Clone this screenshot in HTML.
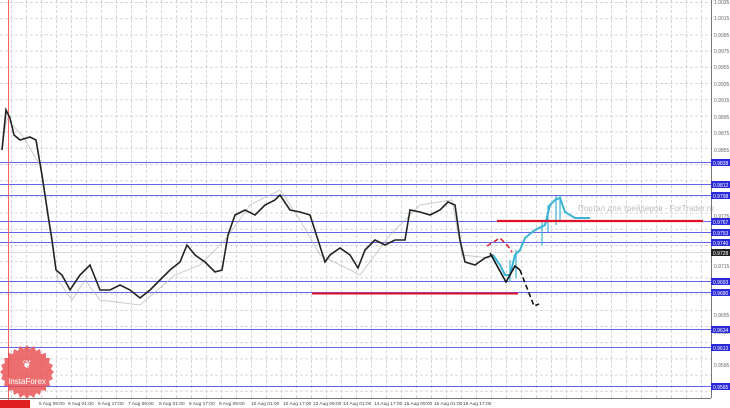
<!DOCTYPE html><html><head><meta charset="utf-8"><style>
html,body{margin:0;padding:0;background:#fff;width:730px;height:408px;overflow:hidden;font-family:"Liberation Sans",sans-serif}
</style></head><body>
<svg width="730" height="408" xmlns="http://www.w3.org/2000/svg" font-family="Liberation Sans, DejaVu Sans, sans-serif">
<defs>
<pattern id="gh" width="730" height="16.2" patternUnits="userSpaceOnUse" y="2"><line x1="0" y1="0.5" x2="711" y2="0.5" stroke="#d6d6d6" stroke-dasharray="3,2"/></pattern>
<pattern id="gv" width="15" height="408" patternUnits="userSpaceOnUse" x="11"><line x1="0.5" y1="0" x2="0.5" y2="408" stroke="#d6d6d6" stroke-dasharray="3,2"/></pattern>
</defs>
<rect width="730" height="408" fill="#fff"/>
<rect x="0" y="0" width="711" height="398" fill="url(#gh)"/>
<rect x="0" y="0" width="711" height="398" fill="url(#gv)"/>
<g stroke="#6464e6" stroke-width="1">
<line x1="0" y1="162.5" x2="711" y2="162.5"/><line x1="0" y1="184.5" x2="711" y2="184.5"/><line x1="0" y1="195.5" x2="711" y2="195.5"/><line x1="0" y1="221.5" x2="711" y2="221.5"/><line x1="0" y1="232.5" x2="711" y2="232.5"/><line x1="0" y1="242.5" x2="711" y2="242.5"/><line x1="0" y1="281.5" x2="711" y2="281.5"/><line x1="0" y1="292.5" x2="711" y2="292.5"/><line x1="0" y1="329.5" x2="711" y2="329.5"/><line x1="0" y1="347.5" x2="711" y2="347.5"/><line x1="0" y1="386.5" x2="711" y2="386.5"/>
</g>
<line x1="0" y1="252.5" x2="711" y2="252.5" stroke="#dcdcdc"/>
<line x1="8.5" y1="0" x2="8.5" y2="408" stroke="#ff6060"/>
<polyline fill="none" stroke="#aaa" stroke-width="1" opacity=".6" points="3,140 7,118 12,125 22,135 40,165 50,230 58,280 72,300 85,280 100,300 140,305 175,275 200,265 225,240 250,205 280,190 300,220 320,255 360,275 390,235 420,205 452,200 462,255 490,258"/>
<polyline fill="none" stroke="#222" stroke-width="1.6" points="2,150 6,110 10,118 14,135 20,140 30,137 36,140 42,175 48,215 52,240 56,270 62,275 70,290 80,275 90,265 100,290 110,290 120,285 130,290 140,298 150,290 160,280 170,270 180,262 187,245 195,255 205,262 215,272 222,270 228,235 235,215 245,210 255,215 265,205 275,200 280,195 290,210 300,212 310,215 318,240 325,262 330,255 340,248 350,255 358,268 365,250 375,240 385,245 395,240 405,240 410,210 420,212 430,215 440,210 448,202 455,205 460,240 465,262 475,265 485,258 493,255"/>
<polyline fill="none" stroke="#3ab4d4" stroke-width="2" points="493,255 500,265 505,275 510,275 515,255 520,250 525,238 535,230 545,225 550,205 555,200 560,198 565,212 575,218 590,218"/>
<g stroke="#3ab4d4" stroke-width="1.2"><line x1="510" y1="260" x2="510" y2="282"/><line x1="516" y1="250" x2="516" y2="278"/><line x1="542" y1="222" x2="542" y2="245"/><line x1="548" y1="205" x2="548" y2="232"/><line x1="556" y1="196" x2="556" y2="225"/><line x1="560" y1="195" x2="560" y2="222"/></g>
<line x1="497" y1="221" x2="703" y2="221" stroke="#e0102a" stroke-width="2.2"/>
<line x1="312" y1="293.5" x2="518" y2="293.5" stroke="#e0102a" stroke-width="2"/>
<polyline fill="none" stroke="#111" stroke-width="1.6" points="490,253 506,282 515,266 520,270"/>
<polyline fill="none" stroke="#111" stroke-width="1.6" stroke-dasharray="5,3" points="520,270 534,306 539,304"/>
<polyline fill="none" stroke="#e02030" stroke-width="1.6" stroke-dasharray="5,3" points="487,246 500,238 508,246 512,252"/>
<text x="578" y="211" font-size="8" fill="#bbb">Портал для трейдеров - ForTrader.ru</text>
<line x1="711.5" y1="0" x2="711.5" y2="398" stroke="#777"/>
<line x1="0" y1="398.5" x2="711" y2="398.5" stroke="#777"/>
<g font-size="5" fill="#666">
<text x="714" y="4">1.0035</text><text x="714" y="20">1.0015</text><text x="714" y="37">0.9995</text><text x="714" y="53">0.9975</text><text x="714" y="69">0.9955</text><text x="714" y="86">0.9935</text><text x="714" y="102">0.9915</text><text x="714" y="119">0.9895</text><text x="714" y="135">0.9875</text><text x="714" y="152">0.9855</text><text x="714" y="218">0.9775</text><text x="714" y="268">0.9715</text><text x="714" y="317">0.9655</text><text x="714" y="334">0.9635</text><text x="714" y="367">0.9595</text>
</g>
<g fill="#2a2ad8"><rect x="711" y="159" width="19" height="7"/><rect x="711" y="181" width="19" height="7"/><rect x="711" y="192" width="19" height="7"/><rect x="711" y="218" width="19" height="7"/><rect x="711" y="229" width="19" height="7"/><rect x="711" y="239" width="19" height="7"/><rect x="711" y="278" width="19" height="7"/><rect x="711" y="289" width="19" height="7"/><rect x="711" y="326" width="19" height="7"/><rect x="711" y="344" width="19" height="7"/><rect x="711" y="383" width="19" height="7"/></g>
<rect x="711" y="249" width="19" height="7" fill="#222"/>
<g font-size="5" fill="#fff"><text x="713" y="165">0.9838</text><text x="713" y="187">0.9812</text><text x="713" y="198">0.9798</text><text x="713" y="224">0.9767</text><text x="713" y="235">0.9753</text><text x="713" y="245">0.9740</text><text x="713" y="255">0.9728</text><text x="713" y="284">0.9693</text><text x="713" y="295">0.9680</text><text x="713" y="332">0.9634</text><text x="713" y="350">0.9613</text><text x="713" y="389">0.9565</text></g>
<g font-size="4.8" fill="#444">
<text x="39" y="405">5 Aug 09:00</text><text x="68" y="405">6 Aug 01:00</text><text x="98" y="405">6 Aug 17:00</text><text x="128" y="405">7 Aug 09:00</text><text x="159" y="405">8 Aug 01:00</text><text x="189" y="405">8 Aug 17:00</text><text x="219" y="405">9 Aug 09:00</text><text x="251" y="405">10 Aug 01:00</text><text x="283" y="405">10 Aug 17:00</text><text x="313" y="405">13 Aug 09:00</text><text x="343" y="405">14 Aug 01:00</text><text x="374" y="405">14 Aug 17:00</text><text x="404" y="405">15 Aug 09:00</text><text x="434" y="405">16 Aug 01:00</text><text x="463" y="405">16 Aug 17:00</text>
</g>
<polygon fill="#e84a4a" opacity=".8" points="27,345 30,349 34,346 36,351 40,349 41,354 46,353 46,358 50,358 49,363 53,365 51,369 54,372 51,375 53,379 49,381 50,386 46,386 46,391 41,390 40,395 36,393 34,398 30,395 27,399 24,395 20,398 18,393 14,395 13,390 8,391 8,386 4,386 5,381 1,379 3,375 0,372 3,369 1,365 5,363 4,358 8,358 8,353 13,354 14,349 18,351 20,346 24,349"/>
<text x="27" y="368" font-size="11" fill="#fff" text-anchor="middle">❦</text>
<text x="27" y="384" font-size="8" fill="#fff" text-anchor="middle">InstaForex</text>
<rect x="0" y="400" width="30" height="8" fill="#e02020"/>
</svg>
</body></html>
